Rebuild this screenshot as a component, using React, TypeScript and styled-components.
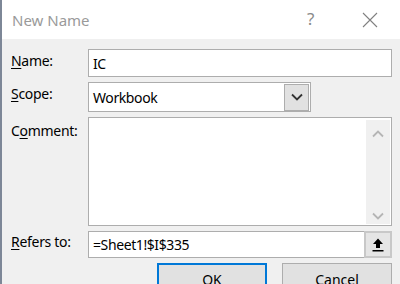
import React from "react";
import styled, { createGlobalStyle } from "styled-components";

const Global = createGlobalStyle`
  html, body { margin: 0; padding: 0; background: #f0f0f0; overflow: hidden; }
  body { font-family: "Noto Sans", "Open Sans", sans-serif; }
`;

const Window = styled.div`
  width: 400px;
  height: 284px;
  box-sizing: border-box;
  border-left: 2px solid #7d8797;
  background: #f0f0f0;
  display: flex;
  flex-direction: column;
  overflow: hidden;
`;

const TitleBar = styled.div`
  height: 39px;
  background: #ffffff;
  display: flex;
  align-items: center;
  padding-left: 10px;
  padding-right: 22px;
  flex-shrink: 0;
`;

const Title = styled.div`
  flex: 1;
  font-size: 15px;
  color: #9a9a9a;
  padding-top: 1px;
`;

const Help = styled.div`
  font-size: 17px;
  color: #8a8a8a;
  width: 14px;
  margin-right: 41px;
  padding-bottom: 2px;
`;

const Body = styled.div`
  padding: 10px 8px 0 9px;
  display: grid;
  grid-template-columns: 77px 1fr;
  grid-template-rows: 28px 30px 109px 27px;
  row-gap: 5px;
  font-size: 14px;
  letter-spacing: -0.3px;
  color: #000;
`;

const Label = styled.div<{ $top?: number }>`
  padding-top: ${(p) => p.$top ?? 3}px;
  line-height: 18px;
  white-space: nowrap;
`;

const U = styled.span`
  text-decoration: underline;
  text-underline-offset: 2px;
  text-decoration-thickness: 1px;
`;

const Field = styled.div<{ $width?: number }>`
  box-sizing: border-box;
  background: #fff;
  border: 1px solid #adadad;
  display: flex;
  align-items: center;
  padding-left: 4px;
  font-size: 14px;
  letter-spacing: -0.4px;
  width: ${(p) => (p.$width ? `${p.$width}px` : "auto")};
  height: 100%;
`;

const FieldText = styled.span`
  flex: 1;
  white-space: nowrap;
`;

const DropButton = styled.div`
  box-sizing: border-box;
  width: 25px;
  height: 27px;
  margin-right: 1px;
  background: #e1e1e1;
  border: 1px solid #adadad;
  display: flex;
  align-items: center;
  justify-content: center;
`;

const Comment = styled.div`
  box-sizing: border-box;
  background: #fff;
  border: 1px solid #adadad;
  display: flex;
  justify-content: flex-end;
  padding: 2px 1px 1px 0;
  height: 109px;
`;

const Scrollbar = styled.div`
  width: 24px;
  background: #f0f0f0;
  display: flex;
  flex-direction: column;
  justify-content: space-between;
  align-items: center;
  padding: 10px 0 4px;
`;

const RefButton = styled.div`
  box-sizing: border-box;
  width: 28px;
  height: 27px;
  margin: 0 -1px 0 0;
  background: #e5e5e5;
  border: 2px solid #c8c8c8;
  display: flex;
  align-items: center;
  justify-content: center;
`;

const Footer = styled.div`
  display: flex;
  justify-content: flex-end;
  gap: 15px;
  padding: 5px 8px 0 0;
`;

const Button = styled.div<{ $primary?: boolean }>`
  box-sizing: border-box;
  width: 110px;
  height: 30px;
  background: #e1e1e1;
  border: ${(p) => (p.$primary ? "2px solid #0078d7" : "1px solid #adadad")};
  display: flex;
  align-items: flex-start;
  justify-content: center;
  padding-top: ${(p) => (p.$primary ? 5 : 6)}px;
  font-size: 14px;
  color: #000;
`;

const Chevron = ({ up, color }: { up?: boolean; color: string }) => (
  <svg width="12" height="8" viewBox="0 0 12 8">
    <path
      d={up ? "M1 6.5 L6 1.5 L11 6.5" : "M1 1.5 L6 6.5 L11 1.5"}
      fill="none"
      stroke={color}
      strokeWidth="1.8"
    />
  </svg>
);

export default function App() {
  return (
    <>
      <Global />
      <Window>
        <TitleBar>
          <Title>New Name</Title>
          <Help>?</Help>
          <svg width="16" height="16" viewBox="0 0 16 16">
            <path d="M1 1 L15 15 M15 1 L1 15" stroke="#808080" strokeWidth="1.1" />
          </svg>
        </TitleBar>
        <Body>
          <Label $top={3}>
            <U>N</U>ame:
          </Label>
          <Field>
            <FieldText>IC</FieldText>
          </Field>
          <Label $top={3}>
            <U>S</U>cope:
          </Label>
          <Field $width={223}>
            <FieldText>Workbook</FieldText>
            <DropButton>
              <Chevron color="#333" />
            </DropButton>
          </Field>
          <Label $top={5}>
            C<U>o</U>mment:
          </Label>
          <Comment>
            <Scrollbar>
              <Chevron up color="#b5b5b5" />
              <Chevron color="#b5b5b5" />
            </Scrollbar>
          </Comment>
          <Label $top={2}>
            <U>R</U>efers to:
          </Label>
          <Field>
            <FieldText>=Sheet1!$I$335</FieldText>
            <RefButton>
              <svg width="12" height="14" viewBox="0 0 12 14">
                <path d="M6 0.5 L11 6 L8 6 L8 10 L4 10 L4 6 L1 6 Z" fill="#000" />
                <rect x="0.5" y="12" width="11" height="1.5" fill="#000" />
              </svg>
            </RefButton>
          </Field>
        </Body>
        <Footer>
          <Button $primary>OK</Button>
          <Button>Cancel</Button>
        </Footer>
      </Window>
    </>
  );
}
